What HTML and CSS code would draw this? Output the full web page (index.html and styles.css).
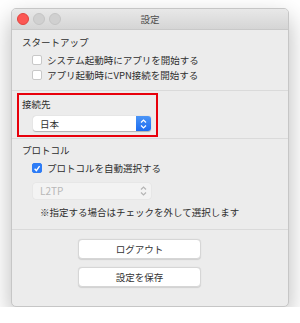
FILE: index.html
```html
<!DOCTYPE html>
<html lang="ja">

<head>
    <meta charset="UTF-8" />
    <meta name="viewport" content="width=device-width, initial-scale=1.0" />
    <title>設定</title>
    <link rel="stylesheet" href="styles.css">
</head>

<body>
    <div class="window">
        <div class="titlebar">
            <div class="lights">
                <span class="light red"></span>
                <span class="light"></span>
                <span class="light"></span>
            </div>
            <div class="title">設定</div>
        </div>

        <div class="section startup">
            <div class="heading">スタートアップ</div>
            <label class="check-row"><span class="box"></span>システム起動時にアプリを開始する</label>
            <label class="check-row"><span class="box"></span>アプリ起動時にVPN接続を開始する</label>
        </div>

        <div class="section dest">
            <div class="highlight">
                <div class="heading">接続先</div>
                <div class="select">
                    <span class="select-text">日本</span>
                    <span class="select-arrows">
                        <svg width="7" height="10" viewBox="0 0 7 10">
                            <path d="M1 3.5 L3.5 1 L6 3.5 M1 6.5 L3.5 9 L6 6.5" fill="none" stroke="#fff" stroke-width="1.2" />
                        </svg>
                    </span>
                </div>
            </div>
        </div>

        <div class="section protocol">
            <div class="heading">プロトコル</div>
            <label class="check-row"><span class="box checked">
                    <svg width="9" height="9" viewBox="0 0 9 9">
                        <path d="M1.8 4.8 L3.8 6.8 L7.4 1.8" fill="none" stroke="#fff" stroke-width="1.6" />
                    </svg>
                </span>プロトコルを自動選択する</label>
            <div class="select disabled">
                <span class="select-text">L2TP</span>
                <span class="select-arrows">
                    <svg width="7" height="10" viewBox="0 0 7 10">
                        <path d="M1 3.5 L3.5 1 L6 3.5 M1 6.5 L3.5 9 L6 6.5" fill="none" stroke="#b5b5b5" stroke-width="1.2" />
                    </svg>
                </span>
            </div>
            <div class="note">※指定する場合はチェックを外して選択します</div>
        </div>

        <div class="actions">
            <button class="btn">ログアウト</button>
            <button class="btn">設定を保存</button>
        </div>
    </div>
</body>

</html>
```

FILE: styles.css
```css
body {
    font-family: "Noto Sans CJK JP", "Noto Sans", sans-serif;
    background-color: #ffffff;
    margin: 0;
    padding: 8px 0 0 11px;
    font-size: 9.5px;
    color: #2e2e2e;
}

.window {
    width: 278px;
    height: 299px;
    box-sizing: border-box;
    background: #ececec;
    border: 1px solid #c6c6c6;
    border-radius: 5px;
    box-shadow: 0 10px 24px rgba(0, 0, 0, 0.28);
    overflow: hidden;
}

/* Title bar */
.titlebar {
    position: relative;
    height: 20px;
    background: linear-gradient(#e8e8e8, #d5d5d5);
    border-bottom: 1px solid #c9c9c9;
    display: flex;
    align-items: center;
    justify-content: center;
}

.lights {
    position: absolute;
    left: 5px;
    top: 4px;
    display: flex;
    gap: 4px;
}

.light {
    width: 12px;
    height: 12px;
    border-radius: 50%;
    background: #d0d0d0;
    box-sizing: border-box;
    border: 1px solid #c4c4c4;
}

.light.red {
    background: #fc5753;
    border-color: #e0443e;
}

.title {
    color: #4d4d4d;
    line-height: 14px;
}

/* Sections */
.section {
    border-bottom: 1px solid #dadada;
}

.heading {
    line-height: 14px;
}

.startup {
    padding: 5px 0 7px 10px;
}

.startup .heading {
    margin-bottom: 4px;
}

.check-row {
    display: flex;
    align-items: center;
    height: 14px;
    margin-left: 10px;
    margin-bottom: 1px;
}

.box {
    width: 10px;
    height: 10px;
    box-sizing: border-box;
    background: #fff;
    border: 1px solid #c8c8c8;
    border-radius: 2px;
    margin-right: 5px;
    display: flex;
    align-items: center;
    justify-content: center;
}

.box.checked {
    background: #2e7cf6;
    border-color: #2e7cf6;
}

.dest {
    padding: 2px 0 1px 5px;
}

.highlight {
    width: 141px;
    height: 44px;
    box-sizing: border-box;
    border: 2px solid #e8000b;
    padding: 2px 0 0 3px;
}

.highlight .heading {
    margin-bottom: 5px;
}

.select {
    width: 118px;
    height: 15px;
    box-sizing: border-box;
    background: #fff;
    border-radius: 3px;
    box-shadow: 0 0.5px 1px rgba(0, 0, 0, 0.25);
    display: flex;
    align-items: center;
    justify-content: space-between;
    margin-left: 11px;
}

.select-text {
    padding-left: 7px;
    line-height: 14px;
}

.select-arrows {
    width: 15px;
    height: 15px;
    background: linear-gradient(#4b95f7, #1c6cf0);
    border-radius: 0 3px 3px 0;
    display: flex;
    align-items: center;
    justify-content: center;
}

.protocol {
    padding: 4px 0 10px 10px;
}

.protocol .heading {
    margin-bottom: 4px;
}

.select.disabled {
    margin: 8px 0 6px 11px;
    height: 16px;
    background: #f3f3f3;
    box-shadow: 0 0 0 0.5px #e2e2e2;
    color: #b8b8b8;
    font-size: 10px;
}

.select.disabled .select-arrows {
    background: none;
}

.note {
    margin-left: 18px;
    line-height: 14px;
}

/* Buttons */
.actions {
    display: flex;
    flex-direction: column;
    gap: 8px;
    padding: 9px 0 0 66px;
}

.btn {
    width: 123px;
    height: 20px;
    font-family: inherit;
    font-size: 9.5px;
    color: #333;
    background: #fff;
    border: 1px solid #d6d6d6;
    border-radius: 4px;
    box-shadow: 0 0.5px 1px rgba(0, 0, 0, 0.12);
    padding: 0;
}
```
